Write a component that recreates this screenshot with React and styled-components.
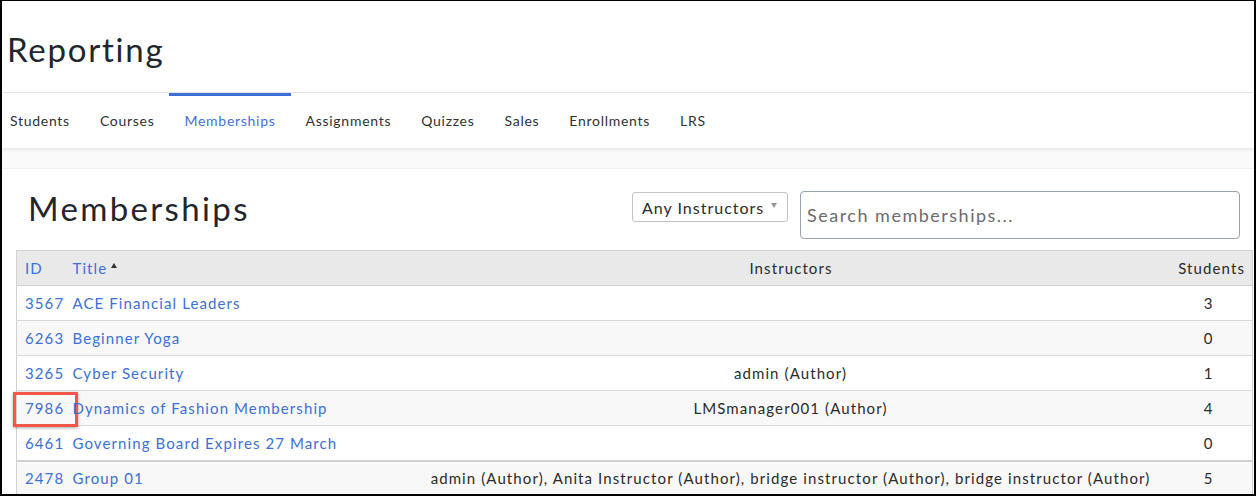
import React from "react";
import styled, { createGlobalStyle } from "styled-components";

const Global = createGlobalStyle`
  html, body { margin: 0; padding: 0; background: #fff; }
  body { font-family: Lato, "Open Sans", sans-serif; color: #2b2b2b; }
  * { box-sizing: border-box; }
`;

const Frame = styled.div`
  width: 1256px;
  height: 496px;
  border: 2px solid #000;
  border-top-width: 1px;
  overflow: hidden;
  display: flex;
  flex-direction: column;
`;

const PageHeader = styled.header`
  height: 92px;
  flex-shrink: 0;
  border-bottom: 1px solid #e4e4e4;
  padding: 28px 0 0 5px;
`;

const PageTitle = styled.h1`
  margin: 0;
  font-weight: 400;
  font-size: 33px;
  letter-spacing: 1.75px;
  color: #22262a;
`;

const TabBar = styled.nav`
  height: 55px;
  flex-shrink: 0;
  display: flex;
  align-items: stretch;
  box-shadow: 0 2px 3px rgba(0, 0, 0, 0.07);
  position: relative;
  z-index: 1;
`;

const Tab = styled.a`
  display: flex;
  align-items: center;
  padding: 0 15px;
  font-size: 14px;
  letter-spacing: 0.72px;
  color: ${(p) => (p.$active ? "#3f72dc" : "#2f3236")};
  border-top: 3px solid ${(p) => (p.$active ? "#3f6fd8" : "transparent")};
  padding-bottom: 3px;
  &:first-child { padding-left: 8px; }
`;

const Band = styled.div`
  height: 21px;
  flex-shrink: 0;
  background: #fafafa;
  border-bottom: 1px solid #f1f1f1;
`;

const Main = styled.main`
  flex: 1;
  padding: 0 3px 0 14px;
`;

const Toolbar = styled.div`
  display: flex;
  align-items: flex-start;
  height: 81px;
  padding-top: 22px;
`;

const SectionTitle = styled.h2`
  margin: -3px 0 0 12px;
  font-weight: 400;
  font-size: 33px;
  letter-spacing: 2.35px;
  color: #22262a;
  flex: 1;
  line-height: 40px;
`;

const Select = styled.div`
  margin-top: 1px;
  width: 156px;
  height: 30px;
  border: 1px solid #c4c4c4;
  border-radius: 3px;
  display: flex;
  align-items: center;
  padding: 0 9px;
  gap: 7px;
  font-size: 16px;
  letter-spacing: 1px;
  color: #2b2b2b;
  white-space: nowrap;
`;

const Caret = styled.span`
  width: 0;
  height: 0;
  border-left: 3.5px solid transparent;
  border-right: 3.5px solid transparent;
  border-top: 5px solid #999;
  margin-top: -3px;
`;

const Search = styled.div`
  margin-left: 12px;
  width: 440px;
  height: 48px;
  border: 1px solid #9aa2ab;
  border-radius: 4px;
  display: flex;
  align-items: center;
  padding: 0 6px;
  font-size: 18px;
  letter-spacing: 1.5px;
  color: #6c6c6c;
  margin-right: 11px;
  white-space: nowrap;
`;

const Table = styled.table`
  width: 1236px;
  border-collapse: collapse;
  table-layout: fixed;
  font-size: 15px;
  letter-spacing: 1.1px;
  border: 1px solid #d2d2d2;
`;

const HeadRow = styled.tr`
  background: #e9e9e9;
  height: 35px;
`;

const Th = styled.th`
  font-weight: 400;
  padding: 0 7px 0 8px;
  text-align: ${(p) => p.$align || "left"};
  color: ${(p) => (p.$link ? "#3d6fd8" : "#2b2b2b")};
  border-bottom: 1px solid #d2d2d2;
  white-space: nowrap;
`;

const Row = styled.tr`
  height: 35px;
  background: ${(p) => (p.$alt ? "#f8f8f8" : "#fff")};
  border-top: ${(p) => (p.$divider ? "2px solid #d0d0d0" : "1px solid #dadada")};
`;

const Td = styled.td`
  padding: 0 8px;
  text-align: ${(p) => p.$align || "left"};
  color: ${(p) => (p.$link ? "#3d6fd8" : "#2b2b2b")};
  white-space: nowrap;
  position: relative;
`;

const SortUp = styled.span`
  display: inline-block;
  width: 0;
  height: 0;
  border-left: 3.5px solid transparent;
  border-right: 3.5px solid transparent;
  border-bottom: 5px solid #333;
  margin-left: 4px;
  vertical-align: 6px;
`;

const Highlight = styled.span`
  position: absolute;
  left: -4px;
  top: 1px;
  width: 65px;
  height: 35px;
  border: 3px solid #f2574a;
  box-shadow: 0 1px 3px rgba(0, 0, 0, 0.35);
  pointer-events: none;
`;

const tabs = ["Students", "Courses", "Memberships", "Assignments", "Quizzes", "Sales", "Enrollments", "LRS"];

const rows = [
  { id: "3567", title: "ACE Financial Leaders", inst: "", n: 3 },
  { id: "6263", title: "Beginner Yoga", inst: "", n: 0 },
  { id: "3265", title: "Cyber Security", inst: "admin (Author)", n: 1 },
  { id: "7986", title: "Dynamics of Fashion Membership", inst: "LMSmanager001 (Author)", n: 4, mark: true },
  { id: "6461", title: "Governing Board Expires 27 March", inst: "", n: 0 },
  {
    id: "2478",
    title: "Group 01",
    inst: "admin (Author), Anita Instructor (Author), bridge instructor (Author), bridge instructor (Author)",
    n: 5,
    divider: true,
  },
];

export default function App() {
  return (
    <>
      <Global />
      <Frame>
        <PageHeader>
          <PageTitle>Reporting</PageTitle>
        </PageHeader>
        <TabBar>
          {tabs.map((t) => (
            <Tab key={t} $active={t === "Memberships"}>{t}</Tab>
          ))}
        </TabBar>
        <Band />
        <Main>
          <Toolbar>
            <SectionTitle>Memberships</SectionTitle>
            <Select>
              Any Instructors <Caret />
            </Select>
            <Search>Search memberships...</Search>
          </Toolbar>
          <Table>
            <colgroup>
              <col style={{ width: 48 }} />
              <col style={{ width: 351 }} />
              <col style={{ width: 750 }} />
              <col style={{ width: 87 }} />
            </colgroup>
            <thead>
              <HeadRow>
                <Th $link>ID</Th>
                <Th $link>
                  Title<SortUp />
                </Th>
                <Th $align="center">Instructors</Th>
                <Th $align="right">Students</Th>
              </HeadRow>
            </thead>
            <tbody>
              {rows.map((r, i) => (
                <Row key={r.id} $alt={i % 2 === 1} $divider={r.divider}>
                  <Td $link>
                    {r.id}
                    {r.mark && <Highlight />}
                  </Td>
                  <Td $link>{r.title}</Td>
                  <Td $align="center">{r.inst}</Td>
                  <Td $align="center">{r.n}</Td>
                </Row>
              ))}
            </tbody>
          </Table>
        </Main>
      </Frame>
    </>
  );
}
